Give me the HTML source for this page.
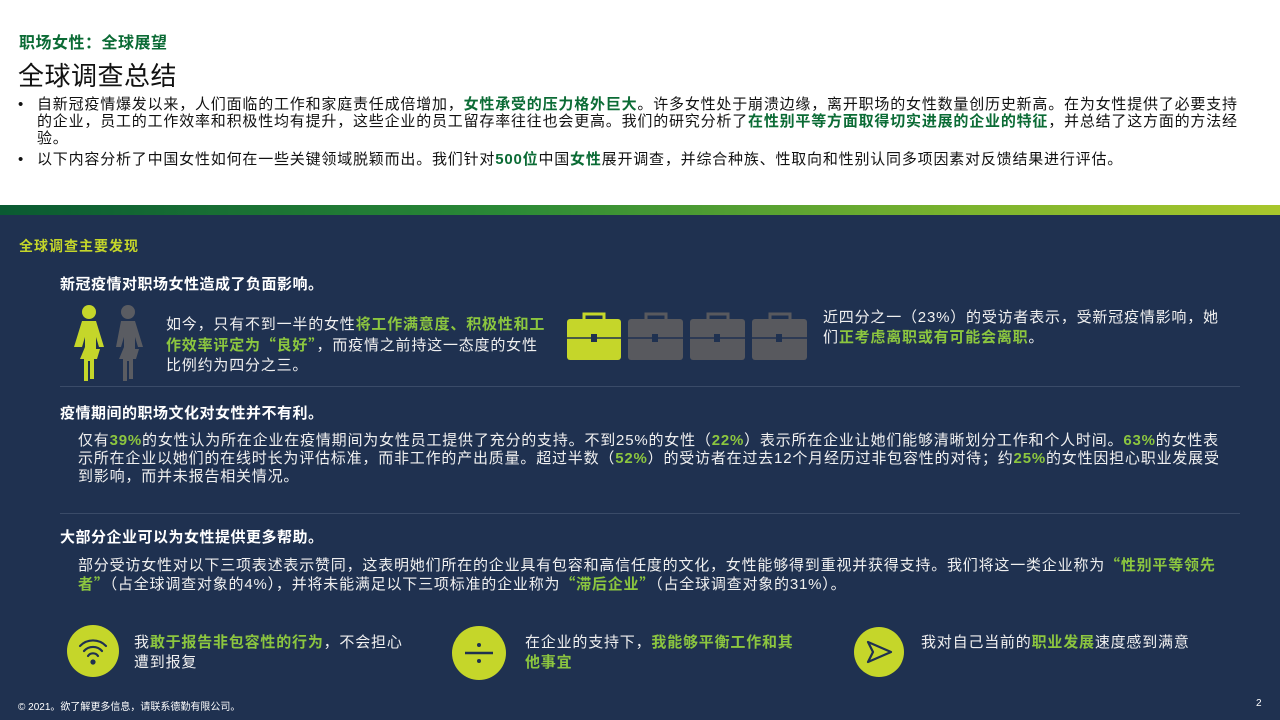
<!DOCTYPE html>
<html><head><meta charset="utf-8"><style>
*{margin:0;padding:0;box-sizing:border-box}
body{width:1280px;height:720px;overflow:hidden;position:relative;font-family:"Liberation Sans","Noto Sans CJK SC",sans-serif;background:#fff}
.a{position:absolute}
.g{color:#0b6b35;font-weight:bold}
.lg{color:#8cc63f;font-weight:bold}
.q{font-family:"Noto Sans CJK SC",sans-serif}
.dark{position:absolute;left:0;top:215px;width:1280px;height:505px;background:#1f3150;color:#fff}
.t{font-size:15px;line-height:17px;color:#f0f0f0;letter-spacing:0.8px}
.h{font-size:15px;font-weight:bold;color:#fff;letter-spacing:0.5px}
.line{position:absolute;height:1px;background:#3a4b68}
.circ{position:absolute;width:50px;height:50px;border-radius:50%;background:#c5d62a}
</style></head><body>
<div class="a g" style="left:19px;top:29px;font-size:16px;letter-spacing:0.5px">职场女性：全球展望</div>
<div class="a" style="left:18px;top:56px;font-size:26px;color:#111;letter-spacing:0.5px">全球调查总结</div>
<div class="a" style="left:18px;top:96px;width:1250px;font-size:15px;line-height:17px;color:#111;letter-spacing:0.8px;white-space:nowrap">
<div style="position:relative;padding-left:19px">
<span style="position:absolute;left:0">•</span>自新冠疫情爆发以来，人们面临的工作和家庭责任成倍增加，<span class="g">女性承受的压力格外巨大</span>。许多女性处于崩溃边缘，离开职场的女性数量创历史新高。在为女性提供了必要支持<br>的企业，员工的工作效率和积极性均有提升，这些企业的员工留存率往往也会更高。我们的研究分析了<span class="g">在性别平等方面取得切实进展的企业的特征</span>，并总结了这方面的方法经<br>验。</div>
<div style="position:relative;padding-left:19px;margin-top:4px">
<span style="position:absolute;left:0">•</span>以下内容分析了中国女性如何在一些关键领域脱颖而出。我们针对<span class="g">500位</span>中国<span class="g">女性</span>展开调查，并综合种族、性取向和性别认同多项因素对反馈结果进行评估。</div>
</div>
<div class="a" style="left:0;top:205px;width:1280px;height:10px;background:linear-gradient(90deg,#0a5a32,#2b8a36 40%,#7ab32e 75%,#a8c62c)"></div>
<div class="dark">
<div class="a" style="left:19px;top:21px;font-size:14px;font-weight:bold;color:#c5d62a;letter-spacing:1px">全球调查主要发现</div>
<div class="a h" style="left:60px;top:58px">新冠疫情对职场女性造成了负面影响。</div>
<svg class="a" style="left:70px;top:86px" width="80" height="80" viewBox="0 0 80 80">
<g fill="#c5d62a"><circle cx="19" cy="11" r="7"/><path d="M12 20h14l8 26h-5l-3-10v12h4l-3 10h-3v20h-4V60h-2v20h-4V58h-4l5-12V36l-3 10H4z"/></g>
<g fill="#5a5c62"><circle cx="58" cy="11" r="7"/><path d="M51 20h14l8 26h-5l-3-10v12h4l-3 10h-3v20h-4V60h-2v20h-4V58h-4l5-12V36l-3 10h-5z"/></g>
</svg>
<div class="a t" style="left:166px;top:100px;width:386px;line-height:20px">如今，只有不到一半的女性<span class="lg">将工作满意度、积极性和工作效率评定为<span class="q">“</span>良好<span class="q">”</span></span>，而疫情之前持这一态度的女性比例约为四分之三。</div>
<svg class="a" style="left:566px;top:96px" width="242" height="50" viewBox="0 0 242 50">
<path d="M18 8V3h20v5" fill="none" stroke="#c5d62a" stroke-width="3"/><rect x="1" y="8" width="54" height="41" rx="3" fill="#c5d62a"/><path d="M1 27h54" stroke="#1f3150" stroke-width="1.5"/><rect x="25" y="23" width="6" height="8" fill="#1f3150"/>
<g fill="#58595e"><path d="M80 8V3h20v5" fill="none" stroke="#58595e" stroke-width="3"/><rect x="62" y="8" width="55" height="41" rx="3"/><path d="M142 8V3h20v5" fill="none" stroke="#58595e" stroke-width="3"/><rect x="124" y="8" width="55" height="41" rx="3"/><path d="M204 8V3h20v5" fill="none" stroke="#58595e" stroke-width="3"/><rect x="186" y="8" width="55" height="41" rx="3"/></g>
<path d="M62 27h55M124 27h55M186 27h55" stroke="#1f3150" stroke-width="1.5"/>
<g fill="#1f3150"><rect x="86" y="23" width="6" height="8"/><rect x="148" y="23" width="6" height="8"/><rect x="210" y="23" width="6" height="8"/></g>
</svg>
<div class="a t" style="left:823px;top:93px;width:405px;line-height:20px">近四分之一（23%）的受访者表示，受新冠疫情影响，她们<span class="lg">正考虑离职或有可能会离职</span>。</div>
<div class="line" style="left:60px;top:171px;width:1180px"></div>
<div class="a h" style="left:60px;top:187px">疫情期间的职场文化对女性并不有利。</div>
<div class="a t" style="left:78px;top:217px;width:1145px;line-height:18px">仅有<span class="lg">39%</span>的女性认为所在企业在疫情期间为女性员工提供了充分的支持。不到25%的女性（<span class="lg">22%</span>）表示所在企业让她们能够清晰划分工作和个人时间。<span class="lg">63%</span>的女性表示所在企业以她们的在线时长为评估标准，而非工作的产出质量。超过半数（<span class="lg">52%</span>）的受访者在过去12个月经历过非包容性的对待；约<span class="lg">25%</span>的女性因担心职业发展受到影响，而并未报告相关情况。</div>
<div class="line" style="left:60px;top:298px;width:1180px"></div>
<div class="a h" style="left:60px;top:311px">大部分企业可以为女性提供更多帮助。</div>
<div class="a t" style="left:78px;top:341px;width:1160px;line-height:18px">部分受访女性对以下三项表述表示赞同，这表明她们所在的企业具有包容和高信任度的文化，女性能够得到重视并获得支持。我们将这一类企业称为<span class="lg"><span class="q">“</span>性别平等领先者<span class="q">”</span></span>（占全球调查对象的4%），并将未能满足以下三项标准的企业称为<span class="lg"><span class="q">“</span>滞后企业<span class="q">”</span></span>（占全球调查对象的31%）。</div>
<div class="circ" style="left:67px;top:410px;width:52px;height:52px"><svg width="52" height="52" viewBox="0 0 52 52" fill="none" stroke="#1f3150" stroke-width="2.2" stroke-linecap="round"><path d="M13 21a18 18 0 0 1 26 0M17 26a12 12 0 0 1 18 0M21 31a6 6 0 0 1 10 0"/><circle cx="26" cy="37" r="1.5" fill="#1f3150"/></svg></div>
<div class="a t" style="left:134px;top:418px;width:282px;line-height:20px">我<span class="lg">敢于报告非包容性的行为</span>，不会担心遭到报复</div>
<div class="circ" style="left:452px;top:411px;width:54px;height:54px"><svg width="54" height="54" viewBox="0 0 54 54"><path d="M13 27h28" stroke="#1f3150" stroke-width="2.5"/><circle cx="27" cy="19" r="2" fill="#1f3150"/><circle cx="27" cy="35" r="2" fill="#1f3150"/></svg></div>
<div class="a t" style="left:525px;top:418px;width:275px;line-height:20px">在企业的支持下，<span class="lg">我能够平衡工作和其他事宜</span></div>
<div class="circ" style="left:854px;top:412px;width:50px;height:50px"><svg width="50" height="50" viewBox="0 0 50 50"><path d="M14 15l23 10-23 10 5-10z" fill="none" stroke="#1f3150" stroke-width="2.2" stroke-linejoin="round"/></svg></div>
<div class="a t" style="left:921px;top:418px;width:300px;line-height:20px">我对自己当前的<span class="lg">职业发展</span>速度感到满意</div>
<div class="a" style="left:18px;top:483px;font-size:10px;color:#fff">© 2021。欲了解更多信息，请联系德勤有限公司。</div>
<div class="a" style="left:1256px;top:483px;font-size:10px;color:#fff">2</div>
</div>
</body></html>
